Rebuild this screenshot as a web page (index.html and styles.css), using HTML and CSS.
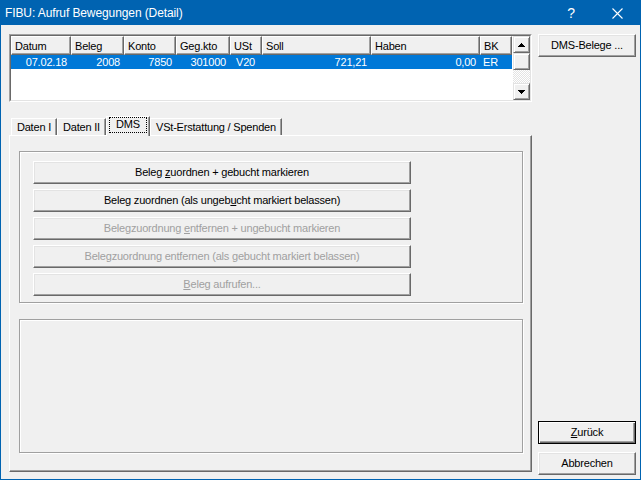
FILE: index.html
```html
<!DOCTYPE html>
<html>
<head>
<meta charset="utf-8">
<link rel="stylesheet" href="styles.css">
</head>
<body>
<div class="window">
  <div class="titlebar">
    <span class="title">FIBU: Aufruf Bewegungen (Detail)</span>
    <span class="cap help">?</span>
    <span class="cap close"><svg width="11" height="11" viewBox="0 0 11 11"><path d="M0.5 0.5L10.5 10.5M10.5 0.5L0.5 10.5" stroke="#fff" stroke-width="1.1" fill="none"/></svg></span>
  </div>
  <div class="client">
    <div class="leftcol">
      <div class="list">
        <div class="list-in">
          <div class="list-main">
            <div class="hdr">
              <div class="hc c1">Datum</div>
              <div class="hc c2">Beleg</div>
              <div class="hc c3">Konto</div>
              <div class="hc c4">Geg.kto</div>
              <div class="hc c5">USt</div>
              <div class="hc c6">Soll</div>
              <div class="hc c7">Haben</div>
              <div class="hc c8">BK</div>
            </div>
            <div class="row sel">
              <div class="rc c1 r">07.02.18</div>
              <div class="rc c2 r">2008</div>
              <div class="rc c3 r">7850</div>
              <div class="rc c4 r">301000</div>
              <div class="rc c5 ust">V20</div>
              <div class="rc c6 r">721,21</div>
              <div class="rc c7 r">0,00</div>
              <div class="rc c8 bk">ER</div>
            </div>
          </div>
          <div class="vscroll">
            <div class="sb-btn"><svg width="7" height="4" viewBox="0 0 7 4"><path d="M3 0h1v1h1v1h1v1h1v1H0V3h1V2h1V1h1z" fill="#000"/></svg></div>
            <div class="sb-btn thumb"></div>
            <div class="sb-track"></div>
            <div class="sb-btn"><svg width="7" height="4" viewBox="0 0 7 4"><path d="M0 0h7v1H6v1H5v1H4v1H3V3H2V2H1V1H0z" fill="#000"/></svg></div>
          </div>
        </div>
      </div>
      <div class="tabs">
        <div class="tab t1">Daten I</div>
        <div class="tab t2">Daten II</div>
        <div class="tab t3 sel"><span class="focus">DMS</span></div>
        <div class="tab t4">VSt-Erstattung / Spenden</div>
      </div>
      <div class="panel">
        <div class="group g1">
          <div class="btn"><span>Beleg <u>z</u>uordnen + gebucht markieren</span></div>
          <div class="btn"><span>Beleg zuordnen (als ungeb<u>u</u>cht markiert belassen)</span></div>
          <div class="btn dis"><span>Belegzuordnung <u>e</u>ntfernen + ungebucht markieren</span></div>
          <div class="btn dis"><span>Belegzuordnung entfernen (als <u>g</u>ebucht markiert belassen)</span></div>
          <div class="btn dis"><span><u>B</u>eleg aufrufen...</span></div>
        </div>
        <div class="group g2"></div>
      </div>
    </div>
    <div class="rightcol">
      <div class="btn side"><span>DMS-Belege ...</span></div>
      <div class="spacer"></div>
      <div class="btn side def"><span><u>Z</u>urück</span></div>
      <div class="btn side"><span>Abbrechen</span></div>
    </div>
  </div>
</div>
</body>
</html>
```

FILE: styles.css
```css
* { box-sizing: border-box; }
html, body { margin: 0; padding: 0; }
body {
  width: 641px;
  height: 480px;
  overflow: hidden;
  background: #f0f0f0;
  font-family: "Liberation Sans", Arial, sans-serif;
  font-size: 11px;
  letter-spacing: -0.2px;
  color: #000;
}
.window {
  width: 641px;
  height: 480px;
  border: 1px solid #0063b1;
  display: flex;
  flex-direction: column;
  background: #f0f0f0;
}
.titlebar {
  height: 24px;
  flex: none;
  background: #0063b1;
  color: #fff;
  display: flex;
  align-items: center;
  font-size: 12px;
  letter-spacing: -0.1px;
  padding-left: 4px;
}
.title { flex: 1; }
.cap {
  width: 46px;
  height: 24px;
  display: flex;
  align-items: center;
  justify-content: center;
}
.help { font-size: 14px; }
.client {
  flex: 1;
  display: flex;
  padding: 9px 3px 4px 8px;
  gap: 6px;
}
.leftcol {
  width: 523px;
  display: flex;
  flex-direction: column;
  padding-bottom: 3px;
}
.rightcol {
  width: 98px;
  display: flex;
  flex-direction: column;
}
.spacer { flex: 1; }

/* list view */
.list {
  height: 68px;
  flex: none;
  border: 1px solid;
  border-color: #a0a0a0 #fff #fff #a0a0a0;
}
.list-in {
  height: 100%;
  border: 1px solid;
  border-color: #696969 #e3e3e3 #e3e3e3 #696969;
  background: #fff;
  display: flex;
}
.list-main { flex: 1; }
.hdr, .row { display: flex; }
.hc {
  height: 19px;
  background: #f0f0f0;
  border-top: 1px solid #fff;
  border-left: 1px solid #fff;
  border-right: 1px solid #696969;
  border-bottom: 1px solid #696969;
  box-shadow: inset -1px -1px #a0a0a0;
  padding: 3px 0 0 3px;
  line-height: 13px;
  white-space: nowrap;
}
.c1 { width: 60px; }
.c2 { width: 53px; }
.c3 { width: 52px; }
.c4 { width: 54px; }
.c5 { width: 32px; }
.c6 { width: 109px; }
.c7 { width: 109px; }
.c8 { width: 32px; }
.row.sel { background: #0078d7; color: #fff; width: 501px; }
.rc {
  height: 14px;
  line-height: 14px;
  white-space: nowrap;
}
.rc.r { text-align: right; padding-right: 4px; }
.rc.ust { padding-left: 6px; }
.rc.bk { padding-left: 3px; }

.vscroll {
  width: 17px;
  display: flex;
  flex-direction: column;
}
.sb-btn {
  height: 17px;
  flex: none;
  background: #f0f0f0;
  border: 1px solid;
  border-color: #e3e3e3 #696969 #696969 #e3e3e3;
  box-shadow: inset 1px 1px #fff, inset -1px -1px #a0a0a0;
  display: flex;
  align-items: center;
  justify-content: center;
}
.sb-btn svg { display: block; }
.sb-track {
  flex: 1;
  background: repeating-conic-gradient(#fff 0 25%, #e3e3e3 0 50%) 0 0 / 2px 2px;
}

/* tabs */
.tabs {
  height: 20px;
  flex: none;
  margin-top: 13px;
  display: flex;
  align-items: flex-end;
  padding-left: 2px;
  position: relative;
  z-index: 1;
}
.tab {
  height: 17px;
  background: #f0f0f0;
  border-top: 1px solid #fff;
  border-left: 1px solid #fff;
  border-right: 1px solid #696969;
  box-shadow: inset -1px 0 #a0a0a0;
  padding-top: 2px;
  text-align: center;
  white-space: nowrap;
  line-height: 13px;
}
.t1 { width: 46px; }
.t2 { width: 49px; }
.t3 { width: 44px; }
.t4 { width: 132px; }
.tab.sel {
  height: 20px;
  margin-bottom: -1px;
  padding: 0 2px 0 2px;
}
.focus {
  display: block;
  height: 16px;
  border: 1px dotted #000;
  line-height: 13px;
}

/* panel */
.panel {
  flex: 1;
  border: 1px solid;
  border-color: #fff #696969 #696969 #fff;
  box-shadow: inset -1px -1px #a0a0a0;
  padding: 15px 0 0 9px;
  display: flex;
  flex-direction: column;
  gap: 16px;
}
.group {
  width: 504px;
  border: 1px solid #a0a0a0;
  box-shadow: 1px 1px 0 #fff, inset 1px 1px 0 #fff;
}
.g1 {
  height: 152px;
  padding: 9px 0 0 13px;
  display: flex;
  flex-direction: column;
  gap: 5px;
}
.g2 { height: 134px; }

/* buttons */
.btn {
  height: 23px;
  width: 378px;
  flex: none;
  background: #f0f0f0;
  border: 1px solid;
  border-color: #fff #696969 #696969 #fff;
  box-shadow: inset -1px -1px #a0a0a0, inset 1px 1px #e3e3e3;
  display: flex;
  align-items: center;
  justify-content: center;
  padding-bottom: 1px;
  white-space: nowrap;
}
.btn.dis { color: #a0a0a0; }
.btn.side { width: 98px; }
.btn.def {
  border-color: #000;
  box-shadow: inset 1px 1px #fff, inset -1px -1px #696969, inset -2px -2px #a0a0a0;
  margin-bottom: 8px;
}
```
